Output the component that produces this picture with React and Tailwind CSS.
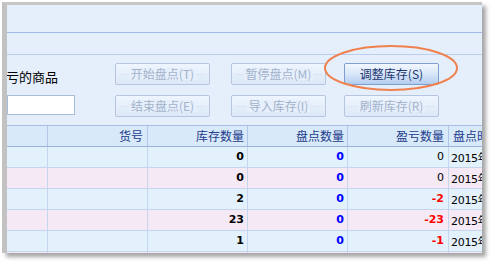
import React from "react";

const cjk = { fontFamily: '"Noto Sans CJK SC", "DejaVu Sans", sans-serif' };
const num = { fontFamily: '"DejaVu Sans", "Noto Sans CJK SC", sans-serif' };

function DisabledBtn({ children }) {
  return (
    <div className="relative w-[95px] h-[22px] rounded-[2px] border border-[#b6c6e0] bg-gradient-to-b from-[#eef5fe] to-[#dde9f8] flex items-center justify-center text-[12px] text-[#a3b3cc] leading-none" style={cjk}>
      <span className="absolute left-[3px] right-[3px] top-1/2 h-px bg-[#dae4f2]" />
      <span className="relative px-[2px] bg-[#e6effb]">{children}</span>
    </div>
  );
}

function ActiveBtn({ children }) {
  return (
    <div className="w-[95px] h-[22px] rounded-[2px] border border-[#7f9fd2] bg-gradient-to-b from-[#f2f7fe] via-[#d9e7f9] to-[#b3cdef] flex items-center justify-center text-[12px] text-[#1d3670] leading-none" style={cjk}>
      {children}
    </div>
  );
}

const rows = [
  { stock: "0", check: "0", diff: "0", neg: false },
  { stock: "0", check: "0", diff: "0", neg: false },
  { stock: "2", check: "0", diff: "-2", neg: true },
  { stock: "23", check: "0", diff: "-23", neg: true },
  { stock: "1", check: "0", diff: "-1", neg: true },
  { stock: "", check: "", diff: "", neg: false },
];

const cols = "grid grid-cols-[41px_100px_100px_100px_101px_1fr]";

export default function App() {
  return (
    <div className="w-[495px] h-[264px] bg-white overflow-hidden">
      <div className="pt-[2px] pl-[2px]">
        <div className="relative w-[480px] h-[251px] border-l-[5px] border-t-[3px] border-l-[#c2c2c2] border-t-[#c6c6c6] bg-[#e4effb] overflow-hidden shadow-[4px_4px_4px_rgba(0,0,0,0.35)]">
          {/* top bands */}
          <div className="h-[28px] border-b border-[#9fb9e8]" />
          <div className="h-[22px] border-b border-[#bccdef]" />

          {/* toolbar */}
          <div className="h-[70px] flex">
            <div className="w-[108px] flex flex-col">
              <div className="mt-[14px] h-[16px] text-[13px] leading-[16px] text-black whitespace-nowrap -ml-[1px]" style={cjk}>
                亏的商品
              </div>
              <div className="mt-[10px] w-[68px] h-[20px] bg-white border border-[#a9bcd8]" />
            </div>
            <div className="pt-[8px] flex flex-col gap-[10px]">
              <DisabledBtn>开始盘点(T)</DisabledBtn>
              <DisabledBtn>结束盘点(E)</DisabledBtn>
            </div>
            <div className="ml-[21px] pt-[8px] flex flex-col gap-[10px]">
              <DisabledBtn>暂停盘点(M)</DisabledBtn>
              <DisabledBtn>导入库存(I)</DisabledBtn>
            </div>
            <div className="ml-[18px] pt-[8px] flex flex-col gap-[10px]">
              <ActiveBtn>调整库存(S)</ActiveBtn>
              <DisabledBtn>刷新库存(R)</DisabledBtn>
            </div>
          </div>

          {/* table */}
          <div className="border-t border-[#a8bde2]">
            <div className={`${cols} h-[21px] bg-[#d8e9f9] border-b border-[#9cb3dc] text-[12px] text-[#1e3c8c] leading-[20px]`} style={cjk}>
              <div className="border-r border-[#b2c6e6]" />
              <div className="border-r border-[#b2c6e6] text-right pr-[4px]">货号</div>
              <div className="border-r border-[#b2c6e6] text-right pr-[3px]">库存数量</div>
              <div className="border-r border-[#b2c6e6] text-right pr-[3px]">盘点数量</div>
              <div className="border-r border-[#b2c6e6] text-right pr-[4px]">盈亏数量</div>
              <div className="pl-[4px] whitespace-nowrap">盘点时间</div>
            </div>
            {rows.map((r, i) => (
              <div
                key={i}
                className={`${cols} h-[21px] border-b border-[#c6d5ee] leading-[20px] text-[11px] ${i % 2 === 0 ? "bg-[#e2f1fc]" : "bg-[#f5e9f6]"}`}
                style={num}
              >
                <div className="border-r border-[#c6d5ee]" />
                <div className="border-r border-[#c6d5ee]" />
                <div className="border-r border-[#c6d5ee] text-right pr-[3px] font-bold text-black">{r.stock}</div>
                <div className="border-r border-[#c6d5ee] text-right pr-[3px] font-bold text-[#0000ff]">{r.check}</div>
                <div className={`border-r border-[#c6d5ee] text-right pr-[4px] ${r.neg ? "font-bold text-[#ff0000]" : "text-black"}`}>{r.diff}</div>
                <div className="pl-[2px] whitespace-nowrap text-black tracking-[-0.3px]">{r.stock !== "" ? <>2015<span style={cjk}>年</span></> : null}</div>
              </div>
            ))}
          </div>

          {/* highlight ellipse */}
          <svg className="absolute left-[316px] top-[39px]" width="136" height="48" viewBox="0 0 136 48">
            <ellipse cx="68" cy="24" rx="66" ry="22" fill="none" stroke="#f0804e" strokeWidth="2" />
          </svg>
        </div>
      </div>
    </div>
  );
}
